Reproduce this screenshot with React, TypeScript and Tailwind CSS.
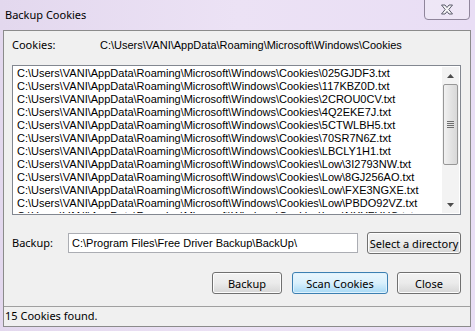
const cookieDir = "C:\\Users\\VANI\\AppData\\Roaming\\Microsoft\\Windows\\Cookies";

const files = [
  "025GJDF3.txt",
  "117KBZ0D.txt",
  "2CROU0CV.txt",
  "4Q2EKE7J.txt",
  "5CTWLBH5.txt",
  "70SR7N6Z.txt",
  "LBCLY1H1.txt",
  "Low\\3I2793NW.txt",
  "Low\\8GJ256AO.txt",
  "Low\\FXE3NGXE.txt",
  "Low\\PBDO92VZ.txt",
  "Low\\NXYFUHQ.txt",
];

const uiFont = "font-['Noto_Sans','Open_Sans',sans-serif]";
const listFont = "font-['Liberation_Sans','DejaVu_Sans',sans-serif]";

function Button({ label, width, active }: { label: string; width: string; active?: boolean }) {
  return (
    <button
      type="button"
      className={
        "h-[22px] whitespace-nowrap rounded-[3px] border text-[11px] leading-none text-black " +
        uiFont +
        " " +
        width +
        (active
          ? " border-[#3c7fb1] bg-gradient-to-b from-[#eaf6fd] via-[#d9f0fc] to-[#a7d9f5] shadow-[inset_0_0_0_1px_#dff2fd]"
          : " border-[#707070] bg-gradient-to-b from-[#f2f2f2] via-[#ebebeb] to-[#d6d6d6] shadow-[inset_0_0_0_1px_#fcfcfc]")
      }
    >
      {label}
    </button>
  );
}

function ScrollBar() {
  return (
    <div className="flex h-full w-[17px] flex-col bg-[#f3f3f3]">
      <div className="flex h-[17px] items-center justify-center">
        <svg width="7" height="4" viewBox="0 0 7 4">
          <path d="M0 4 L3.5 0 L7 4 Z" fill="#4d4d4d" />
        </svg>
      </div>
      <div className="mx-[1px] flex h-[81px] items-center justify-center rounded-[2px] border border-[#979797] bg-gradient-to-r from-[#f1f1f1] via-[#e4e4e4] to-[#d8d8d8]">
        <div className="flex w-[7px] flex-col gap-[1px]">
          <span className="h-[1px] bg-[#6f6f6f]" />
          <span className="h-[1px] bg-[#6f6f6f]" />
          <span className="h-[1px] bg-[#6f6f6f]" />
          <span className="h-[1px] bg-[#6f6f6f]" />
        </div>
      </div>
      <div className="flex-1" />
      <div className="flex h-[17px] items-center justify-center">
        <svg width="7" height="4" viewBox="0 0 7 4">
          <path d="M0 0 L3.5 4 L7 0 Z" fill="#4d4d4d" />
        </svg>
      </div>
    </div>
  );
}

export default function App() {
  return (
    <div className="flex h-[331px] w-[475px] flex-col overflow-hidden bg-gradient-to-r from-[#e3d8ee] via-[#ece2f5] to-[#e9def5]">
      {/* title bar */}
      <div className="flex h-[30px] items-start">
        <div className={"pl-[5px] pt-[7px] text-[11px] leading-[16px] text-black " + uiFont}>Backup Cookies</div>
        <div className="flex-1" />
        <div className="mr-[5px] mt-[-1px] flex h-[21px] w-[46px] items-center justify-center rounded-b-[4px] border border-[#8f859b] bg-[#f0e9f7]/70">
          <svg width="14" height="11" viewBox="0 0 14 11">
            <path
              d="M1.5 1 L5 1 L7 3.5 L9 1 L12.5 1 L8.8 5.5 L12.5 10 L9 10 L7 7.5 L5 10 L1.5 10 L5.2 5.5 Z"
              fill="#f7f7f7"
              stroke="#5b5b6b"
              strokeWidth="1"
              strokeLinejoin="round"
            />
          </svg>
        </div>
      </div>

      {/* client area */}
      <div className="ml-[3px] mr-[4px] flex h-[297px] flex-col border border-[#8b8b8b] bg-[#f0f0f0]">
        <div className="flex flex-1 flex-col pl-[8px] pr-[9px]">
          <div className={"mt-[6px] flex h-[16px] items-center text-[11px] text-black " + listFont}>
            <span className={"w-[88px] " + uiFont}>Cookies:</span>
            <span>{cookieDir}</span>
          </div>

          <div className="mt-[12px] flex h-[150px] border border-[#828790] bg-white p-[1px]">
            <div className={"flex-1 overflow-hidden pl-[3px] text-[11px] leading-[13px] text-black " + listFont}>
              {files.map((f) => (
                <div key={f} className="h-[13px] whitespace-nowrap">
                  {cookieDir}\{f}
                </div>
              ))}
            </div>
            <ScrollBar />
          </div>

          <div className="mt-[17px] flex h-[22px] items-center">
            <span className={"w-[56px] text-[11px] text-black " + uiFont}>Backup:</span>
            <div className={"flex h-[20px] w-[290px] items-center border border-[#abadb3] bg-white pl-[3px] text-[11px] text-black " + listFont}>
              C:\Program Files\Free Driver Backup\BackUp\
            </div>
            <div className="flex-1" />
            <Button label="Select a directory" width="w-[94px]" />
          </div>

          <div className="mt-[18px] flex justify-end">
            <Button label="Backup" width="w-[70px]" />
            <div className="w-[10px]" />
            <Button label="Scan Cookies" width="w-[96px]" active />
            <div className="w-[9px]" />
            <Button label="Close" width="w-[64px]" />
          </div>
        </div>

        <div className={"flex h-[20px] items-center border-t border-[#a0a0a0] pl-[1px] text-[11px] text-black " + uiFont}>
          15 Cookies found.
        </div>
      </div>
    </div>
  );
}
